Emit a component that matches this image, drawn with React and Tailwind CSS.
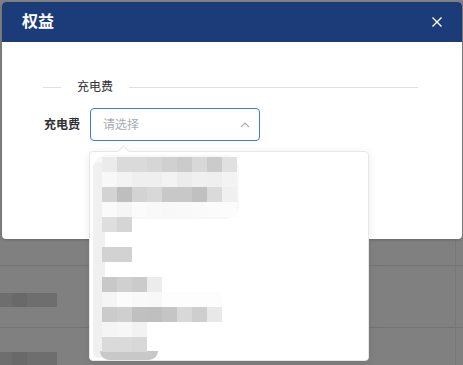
import React from "react";

const rows = [
  ["bg-[#ebebeb]", "bg-[#dadada]", "bg-[#dadada]", "bg-[#d6d6d6]", "bg-[#d0d0d0]", "bg-[#cbcbcb]", "bg-[#d8d8d8]", "bg-[#cbcbcb]", "bg-[#e0e0e0]"],
  ["bg-[#f8f8f8]", "bg-[#f3f3f3]", "bg-[#efefef]", "bg-[#efefef]", "bg-[#f3f3f3]", "bg-[#ececec]", "bg-[#f0f0f0]", "bg-[#efefef]", "bg-[#f3f3f3]"],
  ["bg-[#d3d3d3]", "bg-[#bebebe]", "bg-[#d3d3d3]", "bg-[#d8d8d8]", "bg-[#c8c8c8]", "bg-[#c8c8c8]", "bg-[#c0c0c0]", "bg-[#dadada]", "bg-[#f0f0f0]"],
  ["bg-[#fafafa]", "bg-[#f5f5f5]", "bg-[#fbfbfb]", "bg-[#f9f9f9]", "bg-[#f8f8f8]", "bg-[#f9f9f9]", "bg-[#fafafa]", "bg-[#fbfbfb]", "bg-[#fcfcfc]"],
  ["bg-[#dedede]", "bg-[#d5d5d5]"],
  [],
  ["bg-[#d2d2d2]", "bg-[#d2d2d2]"],
  [],
  ["bg-[#c8c8c8]", "bg-[#d0d0d0]", "bg-[#cbcbcb]", "bg-[#ececec]"],
  ["bg-[#f5f5f5]", "bg-[#fbfbfb]", "bg-[#f9f9f9]", "bg-[#f8f8f8]", "bg-[#fdfdfd]", "bg-[#fdfdfd]", "bg-[#fdfdfd]", "bg-[#fdfdfd]"],
  ["bg-[#cbcbcb]", "bg-[#cfcfcf]", "bg-[#c0c0c0]", "bg-[#bfbfbf]", "bg-[#c5c5c5]", "bg-[#d8d8d8]", "bg-[#cecece]", "bg-[#e8e8e8]"],
  ["bg-[#f5f5f5]", "bg-[#f7f7f7]", "bg-[#f2f2f2]"],
  ["bg-[#dadada]", "bg-[#dadada]", "bg-[#d8d8d8]"],
];

export default function App() {
  return (
    <div
      className="relative w-[463px] h-[365px] overflow-hidden bg-[#808080]"
      style={{ fontFamily: '"Liberation Sans","Noto Sans CJK SC",sans-serif' }}
    >
      {/* background page (under overlay) */}
      <div className="flex flex-col pt-[265px]">
        <div className="h-[1px] bg-[#747474]" />
        <div className="h-[27px]" />
        <div className="flex h-[14px]">
          <div className="w-[12px] bg-[#6e6e6e]" />
          <div className="w-[15px] bg-[#696969]" />
          <div className="w-[15px] bg-[#6e6e6e]" />
          <div className="w-[15px] bg-[#6e6e6e]" />
        </div>
        <div className="h-[20px]" />
        <div className="h-[1px] bg-[#747474]" />
        <div className="h-[24px]" />
        <div className="flex h-[14px]">
          <div className="w-[12px] bg-[#6e6e6e]" />
          <div className="w-[15px] bg-[#696969]" />
          <div className="w-[15px] bg-[#6e6e6e]" />
          <div className="w-[15px] bg-[#6e6e6e]" />
        </div>
      </div>
      <div className="absolute left-[455px] top-[240px] w-[1px] h-[125px] bg-[#767676]" />

      {/* dialog */}
      <div className="absolute left-[2px] top-[2px] w-[460px] h-[237px] bg-white rounded-[4px] shadow-[0_1px_3px_rgba(0,0,0,0.2)] flex flex-col">
        <div className="h-[40px] bg-[#1b3c79] rounded-t-[4px] flex items-center justify-between pl-[20px] pr-[20px]">
          <span className="text-white text-[16px] font-bold leading-none">权益</span>
          <svg width="10" height="10" viewBox="0 0 10 10" className="block">
            <path d="M0.5 0.5 L9.5 9.5 M9.5 0.5 L0.5 9.5" stroke="#ffffff" strokeWidth="1.4" fill="none" />
          </svg>
        </div>
        <div className="flex flex-col pl-[41px] pr-[44px]">
          <div className="mt-[35px] h-[20px] flex items-center">
            <div className="w-[18px] h-[1px] bg-[#dcdfe6]" />
            <span className="px-[16px] text-[12px] text-[#303133] leading-none">充电费</span>
            <div className="flex-1 h-[1px] bg-[#dcdfe6]" />
          </div>
          <div className="mt-[11px] flex items-center">
            <span className="ml-[1px] w-[46px] text-[12px] font-bold text-[#303133]">充电费</span>
            <div className="w-[170px] h-[33px] border border-[#3e7bdc] rounded-[4px] flex items-center justify-between pl-[12px] pr-[9px]">
              <span className="text-[12px] text-[#a8abb2]">请选择</span>
              <svg width="10" height="6" viewBox="0 0 10 6" className="block">
                <path d="M1 5 L5 1 L9 5" stroke="#a8abb2" strokeWidth="1.1" fill="none" />
              </svg>
            </div>
          </div>
        </div>
      </div>

      {/* dropdown */}
      <div className="absolute left-[89px] top-[151px] w-[280px] h-[210px] bg-white border border-[#e4e7ed] rounded-[4px] shadow-[0_2px_10px_rgba(0,0,0,0.08)]">
        <div className="absolute left-[29px] top-[-5px] w-[9px] h-[9px] bg-white border-l border-t border-[#e4e7ed] rotate-45" />
        <div className="absolute left-[3px] top-[3px] w-[146px] h-[64px] rounded-[14px] bg-[#f8f8f8]" />
        <div className="absolute left-[3px] top-[10px] w-[12px] h-[196px] rounded-full bg-[#f0f0f0]" />
        <div className="absolute left-[10px] top-[199px] w-[58px] h-[9px] rounded-b-full bg-[#c8c8c8]" />
        <div className="relative flex flex-col pl-[12px] pt-[5px]">
          {rows.map((r, i) => (
            <div key={i} className="flex h-[15px]">
              {r.map((c, j) => (
                <div key={j} className={"w-[15px] h-[15px] " + c} />
              ))}
            </div>
          ))}
        </div>
      </div>
    </div>
  );
}
